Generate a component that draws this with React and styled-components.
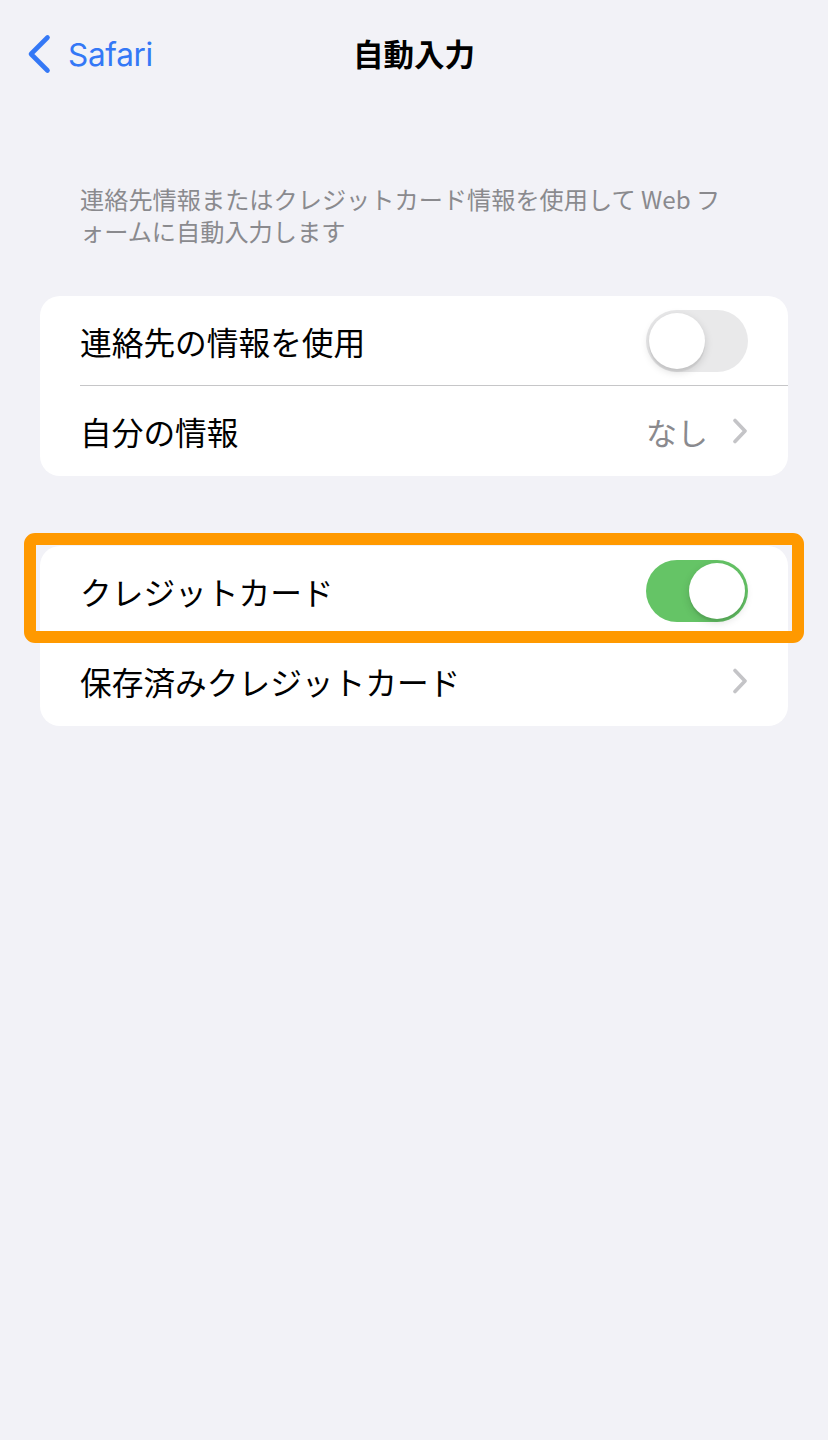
import React from "react";
import styled, { createGlobalStyle } from "styled-components";

const GlobalStyle = createGlobalStyle`
  html, body {
    margin: 0;
    padding: 0;
    background: #f2f2f7;
  }
  body {
    font-family: Inter, "Noto Sans CJK JP", sans-serif;
    -webkit-font-smoothing: antialiased;
  }
`;

const Screen = styled.div`
  min-height: 1440px;
  background: #f2f2f7;
  display: flex;
  flex-direction: column;
`;

const NavBar = styled.div`
  height: 108px;
  display: grid;
  grid-template-columns: 1fr auto 1fr;
  align-items: center;
  padding: 0 27px;
`;

const BackButton = styled.div`
  display: flex;
  align-items: center;
  gap: 17px;
  color: #3478f6;
  font-family: Inter, "Noto Sans CJK JP", sans-serif;
  font-size: 31.5px;
  letter-spacing: -0.3px;
  svg {
    display: block;
  }
`;

const Title = styled.div`
  font-family: "Noto Sans CJK JP", sans-serif;
  font-weight: 700;
  font-size: 30.5px;
  color: #000;
  margin-top: -2px;
`;

const Footnote = styled.div`
  margin: 75px 0 49px;
  padding: 0 80px;
  font-family: "Noto Sans CJK JP", sans-serif;
  font-size: 24.2px;
  line-height: 32px;
  color: #8a8a8e;
  white-space: nowrap;
`;

const Card = styled.div`
  position: relative;
  margin: 0 40px ${(p) => p.$gap || 0}px;
  background: #fff;
  border-radius: 20px;
`;

const Row = styled.div`
  height: 90px;
  padding-left: 40px;
  display: flex;
`;

const RowInner = styled.div`
  flex: 1;
  display: flex;
  align-items: center;
  justify-content: space-between;
  padding-right: 40px;
  border-bottom: ${(p) => (p.$divider ? "1px solid #c6c6c8" : "none")};
`;

const Label = styled.span`
  font-family: "Noto Sans CJK JP", sans-serif;
  font-size: 31.7px;
  color: #000;
`;

const Accessory = styled.div`
  display: flex;
  align-items: center;
  gap: 24px;
`;

const Value = styled.span`
  font-family: "Noto Sans CJK JP", sans-serif;
  font-size: 31px;
  color: #8a8a8e;
`;

const Track = styled.div`
  width: 102px;
  height: 62px;
  border-radius: 31px;
  background: ${(p) => (p.$on ? "#65c466" : "#e9e9ea")};
  display: flex;
  align-items: center;
  justify-content: ${(p) => (p.$on ? "flex-end" : "flex-start")};
  padding: 0 3px;
  box-sizing: border-box;
`;

const Knob = styled.div`
  width: 56px;
  height: 56px;
  border-radius: 50%;
  background: #fff;
  box-shadow: 0 3px 8px rgba(0, 0, 0, 0.15), 0 3px 1px rgba(0, 0, 0, 0.06);
`;

const Highlight = styled.div`
  position: absolute;
  top: -13px;
  left: -16px;
  right: -16px;
  height: 110px;
  box-sizing: border-box;
  border: 12px solid #ff9900;
  border-radius: 11px;
  pointer-events: none;
`;

const BackChevron = () => (
  <svg width="24" height="40" viewBox="0 0 24 40" fill="none">
    <path
      d="M20.5 3.5 L4 20 L20.5 36.5"
      stroke="#3478f6"
      strokeWidth="4.6"
      strokeLinecap="round"
      strokeLinejoin="round"
    />
  </svg>
);

const Chevron = () => (
  <svg width="16" height="26" viewBox="0 0 16 26" fill="none">
    <path
      d="M3 2.5 L13 13 L3 23.5"
      stroke="#c4c4c7"
      strokeWidth="3.6"
      strokeLinecap="round"
      strokeLinejoin="round"
    />
  </svg>
);

const Toggle = ({ on }) => (
  <Track $on={on}>
    <Knob />
  </Track>
);

export default function App() {
  return (
    <>
      <GlobalStyle />
      <Screen>
        <NavBar>
          <BackButton>
            <BackChevron />
            Safari
          </BackButton>
          <Title>自動入力</Title>
          <div />
        </NavBar>

        <Footnote>
          連絡先情報またはクレジットカード情報を使用して Web フ
          <br />
          ォームに自動入力します
        </Footnote>

        <Card $gap={70}>
          <Row>
            <RowInner $divider>
              <Label>連絡先の情報を使用</Label>
              <Toggle on={false} />
            </RowInner>
          </Row>
          <Row>
            <RowInner>
              <Label>自分の情報</Label>
              <Accessory>
                <Value>なし</Value>
                <Chevron />
              </Accessory>
            </RowInner>
          </Row>
        </Card>

        <Card>
          <Row>
            <RowInner>
              <Label>クレジットカード</Label>
              <Toggle on />
            </RowInner>
          </Row>
          <Row>
            <RowInner>
              <Label>保存済みクレジットカード</Label>
              <Chevron />
            </RowInner>
          </Row>
          <Highlight />
        </Card>
      </Screen>
    </>
  );
}
